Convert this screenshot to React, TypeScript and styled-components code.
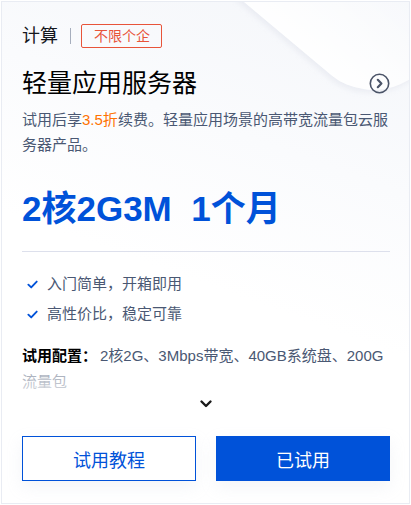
import React from "react";
import styled, { createGlobalStyle } from "styled-components";

const Global = createGlobalStyle`
  html, body { margin: 0; padding: 0; background: #fff; }
  body { font-family: "Liberation Sans", "Noto Sans CJK SC", sans-serif; }
  * { box-sizing: border-box; }
`;

const Card = styled.div`
  position: relative;
  margin: 1px;
  width: 409px;
  height: 503px;
  border: 1px solid #e9ecf3;
  background: linear-gradient(200deg, #f4f6fa 0%, #fafbfd 30%, #ffffff 55%);
  padding: 22px 19px 0 20px;
  overflow: hidden;
  display: flex;
  flex-direction: column;
`;

const Deco = styled.div`
  position: absolute;
  left: 262px;
  top: -142px;
  width: 230px;
  height: 230px;
  border-radius: 40px;
  transform: rotate(52deg) skew(-12deg, -12deg);
  background: linear-gradient(180deg, rgba(248,249,252,0) 30%, rgba(255,255,255,0.95) 100%);
  box-shadow: 2px 4px 5px rgba(215, 219, 230, 0.35);
  pointer-events: none;
`;

const Content = styled.div`
  position: relative;
  display: flex;
  flex-direction: column;
  flex: 1;
`;

const Header = styled.div`
  display: flex;
  align-items: center;
  height: 24px;
`;

const Category = styled.span`
  font-size: 18px;
  color: #16181d;
  line-height: 24px;
`;

const Sep = styled.span`
  width: 1px;
  height: 16px;
  background: #a6aebd;
  margin: 0 10px 0 12px;
`;

const Tag = styled.span`
  border: 1px solid #e8543a;
  color: #e8543a;
  border-radius: 2px;
  font-size: 14px;
  line-height: 22px;
  padding: 0 11px 0 12px;
`;

const TitleRow = styled.div`
  display: flex;
  align-items: center;
  justify-content: space-between;
  margin-top: 18px;
`;

const Title = styled.h2`
  margin: 0;
  font-size: 25px;
  font-weight: 400;
  line-height: 34px;
  color: #000;
`;

const Desc = styled.p`
  margin: 7px 0 0;
  font-size: 15px;
  line-height: 25px;
  color: #4a5873;
`;

const Hl = styled.span`
  color: #ff7200;
`;

const Price = styled.div`
  margin-top: 29px;
  font-size: 35px;
  font-weight: 700;
  line-height: 46px;
  color: #0052d9;
  white-space: pre;
`;

const Divider = styled.div`
  height: 1px;
  background: #dde0ec;
  margin-top: 19px;
`;

const Features = styled.ul`
  list-style: none;
  margin: 21px 0 0;
  padding: 0;
  display: flex;
  flex-direction: column;
  gap: 8px;
`;

const Feature = styled.li`
  display: flex;
  align-items: center;
  font-size: 15px;
  line-height: 22px;
  color: #4a5873;
  padding-left: 5px;
`;

const Check = styled.svg`
  width: 11px;
  height: 11px;
  margin-right: 9px;
  flex: none;
`;

const Config = styled.div`
  position: relative;
  margin-top: 18px;
  font-size: 15px;
  line-height: 26px;
  color: #4a5873;
  &::after {
    content: "";
    position: absolute;
    left: 0;
    right: 0;
    bottom: 0;
    height: 26px;
    background: linear-gradient(180deg, rgba(255,255,255,0.45) 0%, rgba(255,255,255,0.8) 100%);
  }
`;

const ConfigLabel = styled.b`
  color: #000;
  font-weight: 700;
  margin-right: 3px;
`;

const More = styled.div`
  display: flex;
  justify-content: center;
  margin-top: 4px;
  height: 10px;
`;

const Buttons = styled.div`
  display: flex;
  gap: 20px;
  margin-top: 27px;
`;

const Btn = styled.button<{ $primary?: boolean }>`
  flex: 1;
  height: 45px;
  font-family: inherit;
  font-size: 18px;
  border: 1px solid #0052d9;
  border-radius: 0;
  background: ${(p) => (p.$primary ? "#0052d9" : "#fff")};
  color: ${(p) => (p.$primary ? "#fff" : "#0052d9")};
  box-shadow: 0 6px 16px rgba(190, 198, 215, 0.18);
  cursor: pointer;
`;

export default function App() {
  return (
    <>
      <Global />
      <Card>
        <Deco />
        <Content>
          <Header>
            <Category>计算</Category>
            <Sep />
            <Tag>不限个企</Tag>
          </Header>
          <TitleRow>
            <Title>轻量应用服务器</Title>
            <svg width="21" height="21" viewBox="0 0 21 21">
              <circle cx="10.5" cy="10.5" r="9.2" fill="none" stroke="#4b5468" strokeWidth="1.6" />
              <path d="M8.8 6.8 L12.4 10.5 L8.8 14.2" fill="none" stroke="#4b5468" strokeWidth="2.2" strokeLinecap="round" strokeLinejoin="round" />
            </svg>
          </TitleRow>
          <Desc>
            试用后享<Hl>3.5折</Hl>续费。轻量应用场景的高带宽流量包云服务器产品。
          </Desc>
          <Price>{"2核2G3M  1个月"}</Price>
          <Divider />
          <Features>
            {["入门简单，开箱即用", "高性价比，稳定可靠"].map((t) => (
              <Feature key={t}>
                <Check viewBox="0 0 12 12">
                  <path d="M1.5 6.2 L4.6 9.2 L10.6 2.8" fill="none" stroke="#0052d9" strokeWidth="2" strokeLinecap="round" strokeLinejoin="round" />
                </Check>
                {t}
              </Feature>
            ))}
          </Features>
          <Config>
            <ConfigLabel>试用配置：</ConfigLabel>
            2核2G、3Mbps带宽、40GB系统盘、200G流量包
          </Config>
          <More>
            <svg width="14" height="10" viewBox="0 0 14 10">
              <path d="M2.5 2.5 L7 7 L11.5 2.5" fill="none" stroke="#1a1a1a" strokeWidth="2.4" strokeLinecap="round" strokeLinejoin="round" />
            </svg>
          </More>
          <Buttons>
            <Btn>试用教程</Btn>
            <Btn $primary>已试用</Btn>
          </Buttons>
        </Content>
      </Card>
    </>
  );
}
